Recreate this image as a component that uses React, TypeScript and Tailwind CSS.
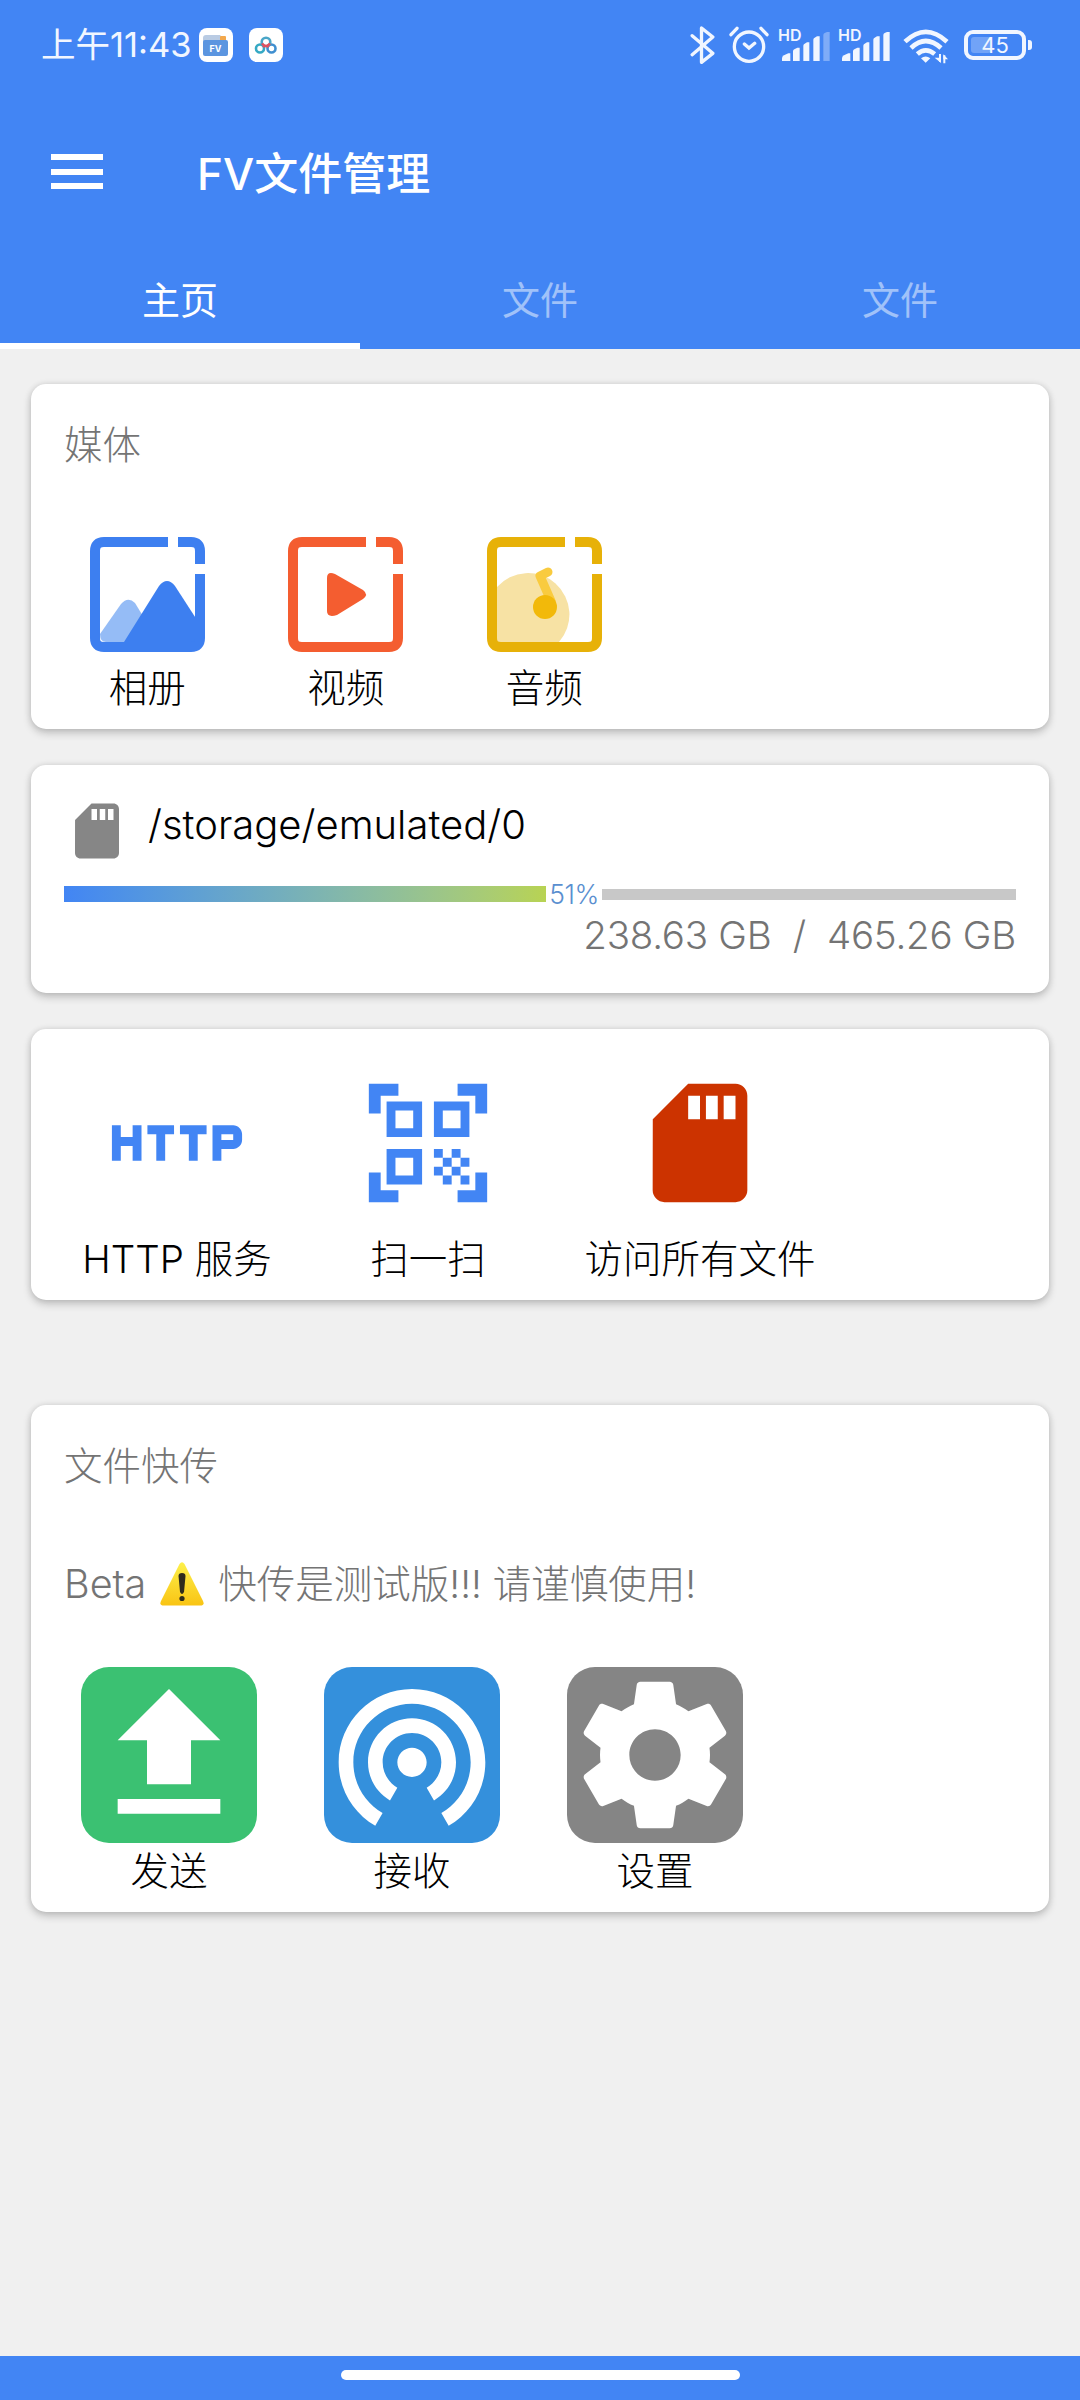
import { useState } from "react";
import type { ReactNode } from "react";
import { MdHttp, MdQrCodeScanner, MdSdCard, MdUpload, MdWifiTethering } from "react-icons/md";

const tabs = ["主页", "文件", "文件"];

const storage = { path: "/storage/emulated/0", used: "238.63 GB", total: "465.26 GB", percent: 51 };

function Signal({ weak }: { weak?: boolean }) {
  return (
    <div className="relative w-[50px] h-[38px]">
      <span className="absolute -left-[2px] top-[2px] text-[16px] leading-[14px] font-semibold">HD</span>
      <svg viewBox="0 0 150 114" className="w-[50px] h-[38px]" fill="currentColor">
        <path d="M6 105v-8q0-6 6-9l13-6h6v23z" />
        <path d="M39 105v-29q0-4 4-6l9-5h7v40z" />
        <path d="M70 105v-46q0-4 4-6l7-4h7v56z" />
        <path d="M100 105v-64q0-4 4-6l7-4h8v74z" />
        <path d="M130 105v-78q0-4 4-6l7-3h8v87z" opacity={weak ? 0.35 : 1} />
      </svg>
    </div>
  );
}

function StatusBar() {
  return (
    <div className="h-[90px] flex items-center justify-between pl-[41px] pr-[48px] text-[#f1f6ff]">
      <div className="flex items-center">
        <span className="w-[158px] whitespace-nowrap text-[34.5px] leading-[40px]">上午11:43</span>
        <svg viewBox="0 0 34 34" className="w-[34px] h-[34px]">
          <rect width="34" height="34" rx="8" fill="#fff" />
          <path d="M4 10q0-3 3-3h14l3 3v6H4z" fill="#b9cbe3" />
          <rect x="21" y="8" width="6" height="6" rx="1" fill="#f3a84c" />
          <rect x="4" y="12" width="25" height="16" rx="2" fill="#5b95e0" />
          <text x="16.500" y="24" textAnchor="middle" fontSize="9" fontWeight="700" fill="#fff">FV</text>
        </svg>
        <svg viewBox="0 0 34 34" className="ml-4 w-[34px] h-[34px]" fill="none" strokeWidth="2.600">
          <rect width="34" height="34" rx="8" fill="#fff" />
          <circle cx="11" cy="20.500" r="4" stroke="#35a9c4" />
          <circle cx="22.500" cy="20.500" r="4" stroke="#3f8fd0" />
          <circle cx="17" cy="14" r="4.300" stroke="#4aa6c8" />
          <path d="M13 15.500q4 5 8 0M14 19l2-2M19.500 19l-2-2" stroke="#e0525f" />
        </svg>
      </div>

      <div className="flex items-center">
        <svg viewBox="0 0 74 114" className="w-[25px] h-[38px]" fill="none" stroke="currentColor" strokeWidth="10" strokeLinejoin="round" strokeLinecap="round">
          <path d="M6 29l62 53-34 27V6l34 27L6 86" />
        </svg>
        <svg viewBox="0 0 118 114" className="ml-[14px] w-[40px] h-[38px]" fill="none" stroke="currentColor" strokeWidth="10" strokeLinecap="round">
          <circle cx="59" cy="62" r="44" />
          <path d="M45 54l14 12 17-14M5 26L23 7M95 7l18 19" />
        </svg>
        <div className="ml-[11px]"><Signal weak /></div>
        <div className="ml-[10px]"><Signal /></div>
        <svg viewBox="0 0 138 114" className="ml-[13px] w-[46px] h-[38px]" fill="none" stroke="currentColor" strokeWidth="14">
          <path d="M6 47Q68-12 132 47" />
          <path d="M24 66Q68 24 114 66" />
          <path d="M43 84Q68 62 95 84" />
          <path d="M54 97q14-11 28 0l-14 13z" fill="currentColor" stroke="none" />
          <path d="M111 84v24M124 112V88" strokeWidth="6" />
          <path d="M95 95h19v16zM121 85l14 15h-14z" fill="currentColor" stroke="none" />
        </svg>
        <div className="ml-[15px] flex items-center">
          <div className="relative w-[62px] h-[30px] rounded-[9px] border-4 border-current flex items-center justify-center">
            <span className="absolute left-[3px] top-[3px] h-4 w-[20px] rounded-[3px] bg-white/25" />
            <span className="relative text-[22px] leading-none">45</span>
          </div>
          <span className="ml-[2px] w-[4px] h-[10px] rounded-r-[3px] bg-current" />
        </div>
      </div>
    </div>
  );
}

function Card({ className, children }: { className: string; children: ReactNode }) {
  return (
    <section className={`mx-[31px] rounded-[15px] bg-white shadow-[0_4px_8px_rgba(0,0,0,0.2),0_0_6px_rgba(0,0,0,0.1)] ${className}`}>
      {children}
    </section>
  );
}

// Rounded frame with the two notches near the top right corner
function MediaFrame({ color, children }: { color: string; children: ReactNode }) {
  return (
    <svg viewBox="0 0 115 115" className="w-[115px] h-[115px]" fill="none">
      {children}
      <path
        d="M78 5H14Q5 5 5 14V101Q5 110 14 110H101Q110 110 110 101V37M110 27V14Q110 5 101 5H88"
        stroke={color}
        strokeWidth="10"
      />
    </svg>
  );
}

function MediaItem({ label, children }: { label: string; children: ReactNode }) {
  return (
    <div className="w-[198.5px] flex flex-col items-center">
      {children}
      <span className="mt-[14px] text-[38.5px] leading-[44px]">{label}</span>
    </div>
  );
}

function ToolItem({ label, className, children }: { label: string; className: string; children: ReactNode }) {
  return (
    <div className={`flex flex-col items-center ${className}`}>
      {children}
      <span className="mt-[23px] whitespace-nowrap text-[38.5px] leading-[44px]">{label}</span>
    </div>
  );
}

function TransferItem({ label, className, children }: { label: string; className: string; children: ReactNode }) {
  return (
    <div className="flex flex-col items-center">
      <div className={`w-[176px] h-[176px] rounded-[28px] text-white ${className}`}>{children}</div>
      <span className="mt-[6px] text-[38.5px] leading-[44px]">{label}</span>
    </div>
  );
}

export default function App() {
  const [activeTab, setActiveTab] = useState(0);

  return (
    <div className="w-[1080px] h-[2400px] flex flex-col overflow-hidden bg-[#f0f0f0] text-black font-light font-['Inter','Noto_Sans_CJK_SC',sans-serif]">
      <header className="h-[349px] shrink-0 bg-[#4285f4] text-white font-normal">
        <StatusBar />
        <div className="h-[163px] flex items-center pl-[51px]">
          <div className="flex flex-col gap-[8.5px]">
            <span className="w-[52px] h-[6px] bg-white" />
            <span className="w-[52px] h-[6px] bg-white" />
            <span className="w-[52px] h-[6px] bg-white" />
          </div>
          <h1 className="ml-[94px] pt-[4px] text-[44px] leading-[52px] font-medium">FV文件管理</h1>
        </div>
        <nav className="h-[96px] flex">
          {tabs.map((tab, i) => (
            <button
              key={i}
              onClick={() => setActiveTab(i)}
              className={`flex-1 pt-[4px] border-b-[6px] text-[38px] leading-[44px] ${
                activeTab === i ? "border-white text-white" : "border-transparent text-white/50"
              }`}
            >
              {tab}
            </button>
          ))}
        </nav>
      </header>

      <main className="flex-1">
        {/* Media */}
        <Card className="mt-[35px] h-[345px] pt-[39px]">
          <h2 className="pl-[33px] text-[38.5px] leading-[44px] text-[#747474]">媒体</h2>
          <div className="mt-[70px] pl-[17px] flex">
            <MediaItem label="相册">
              <MediaFrame color="#3d7ff0">
                <path d="M10 97L31 67Q38 59 45 66L56 84V105H16Q10 105 10 97Z" fill="#95bcf6" />
                <path d="M34 105L69 49Q77 39 85 49L107 83V107H34Z" fill="#3d7ff0" />
              </MediaFrame>
            </MediaItem>
            <MediaItem label="视频">
              <MediaFrame color="#f45d30">
                <path d="M39 41Q39 34 47 37L75 53Q81 57.500 75 62L49 78Q39 81 39 74Z" fill="#f45d30" />
              </MediaFrame>
            </MediaItem>
            <MediaItem label="音频">
              <MediaFrame color="#e7b108">
                <path d="M10 50A40 40 0 0 1 72 105H10Z" fill="#f7e2a4" />
                <path d="M64 64L53 39L61 35" stroke="#f9cb3f" strokeWidth="9" strokeLinecap="round" strokeLinejoin="round" />
                <circle cx="58" cy="70" r="12" fill="#f2b90a" />
              </MediaFrame>
            </MediaItem>
          </div>
        </Card>

        {/* Storage */}
        <Card className="mt-[36px] h-[228px] pt-[33px] px-[33px]">
          <div className="flex items-center">
            <MdSdCard className="w-[66px] h-[66px] text-[#868686]" />
            <span className="ml-[18px] pb-[13px] text-[40px] leading-[44px]">{storage.path}</span>
          </div>
          <div className="mt-[19px] h-[22px] flex items-center">
            <div className="w-[482px] h-[16px] bg-gradient-to-r from-[#4285f4] to-[#b8d352]" />
            <span className="w-[56px] text-center text-[26.5px] leading-[22px] tracking-[-0.5px] text-[#5a8fd0]">{storage.percent}%</span>
            <div className="flex-1 h-[11px] bg-[#c8c8c8]" />
          </div>
          <div className="mt-[6px] text-right whitespace-pre text-[38.5px] leading-[48px] tracking-[-0.25px] text-[#747474]">
            {`${storage.used}  /  ${storage.total}`}
          </div>
        </Card>

        {/* Tools */}
        <Card className="mt-[36px] h-[271px] pt-[43px] flex items-start">
          <ToolItem label="HTTP 服务" className="ml-[46px] w-[200px]">
            <MdHttp className="w-[142px] h-[142px] text-[#4285f4]" />
          </ToolItem>
          <ToolItem label="扫一扫" className="ml-[51px] w-[200px]">
            <MdQrCodeScanner className="w-[142px] h-[142px] text-[#4285f4]" />
          </ToolItem>
          <ToolItem label="访问所有文件" className="ml-[52px] w-[240px]">
            <MdSdCard className="w-[142px] h-[142px] text-[#cc3300]" />
          </ToolItem>
        </Card>

        {/* Quick transfer */}
        <Card className="mt-[105px] h-[507px] pt-[39px]">
          <h2 className="pl-[33px] text-[38.5px] leading-[44px] text-[#747474]">文件快传</h2>
          <div className="mt-[74px] pl-[33px] flex items-center text-[38.5px] leading-[44px] text-[#747474]">
            <span className="text-[39.5px]">Beta</span>
            <svg viewBox="0 0 44 44" className="mx-[14px] w-[44px] h-[44px]">
              <defs>
                <linearGradient id="warn" x1="0" y1="0" x2="0" y2="1">
                  <stop offset="0" stopColor="#fdf04a" />
                  <stop offset="1" stopColor="#f9c414" />
                </linearGradient>
              </defs>
              <path d="M19.500 2Q22-1.500 24.500 2L43 39Q45 43.500 40 43.500H4Q-1 43.500 1 39Z" fill="url(#warn)" />
              <path d="M18.500 14Q18.500 11 22 11T25.500 14L24 30Q22 34 20 30Z" fill="#2f2b1c" />
              <circle cx="22" cy="36.500" r="2.600" fill="#2f2b1c" />
            </svg>
            <span className="whitespace-nowrap">快传是测试版!!! 请谨慎使用!</span>
          </div>
          <div className="mt-[61px] pl-[50px] flex gap-[67px]">
            <TransferItem label="发送" className="bg-[#3bc172]">
              <MdUpload className="w-full h-full" />
            </TransferItem>
            <TransferItem label="接收" className="bg-[#3490dc]">
              <MdWifiTethering className="w-full h-full" />
            </TransferItem>
            <TransferItem label="设置" className="bg-[#858585]">
              <svg viewBox="0 0 24 24" className="w-full h-full" fill="currentColor">
                <path d="M19.430 12.980c.04-.32.07-.64.07-.98s-.03-.66-.07-.98l2.110-1.650c.19-.15.24-.42.12-.64l-2-3.460c-.12-.22-.39-.3-.61-.22l-2.490 1c-.52-.4-1.080-.73-1.690-.98l-.38-2.650C14.460 2.180 14.250 2 14 2h-4c-.25 0-.46.18-.49.42l-.38 2.650c-.61.25-1.170.59-1.690.98l-2.490-1c-.23-.09-.49 0-.61.22l-2 3.460c-.13.22-.07.49.12.64l2.110 1.650c-.04.32-.07.65-.07.98s.03.66.07.98l-2.110 1.650c-.19.15-.24.42-.12.64l2 3.460c.12.22.39.3.61.22l2.490-1c.52.4 1.080.73 1.690.98l.38 2.650c.03.24.24.42.49.42h4c.25 0 .46-.18.49-.42l.38-2.650c.61-.25 1.170-.59 1.690-.98l2.490 1c.23.09.49 0 .61-.22l2-3.460c.12-.22.07-.49-.12-.64l-2.110-1.650zM12 15.500c-1.930 0-3.500-1.570-3.500-3.500s1.570-3.500 3.500-3.500 3.500 1.570 3.500 3.500-1.570 3.500-3.500 3.500z" />
              </svg>
            </TransferItem>
          </div>
        </Card>
      </main>

      <footer className="h-[44px] shrink-0 flex justify-center pt-[14px] bg-[#4285f4]">
        <span className="w-[399px] h-[10px] rounded-full bg-white" />
      </footer>
    </div>
  );
}
